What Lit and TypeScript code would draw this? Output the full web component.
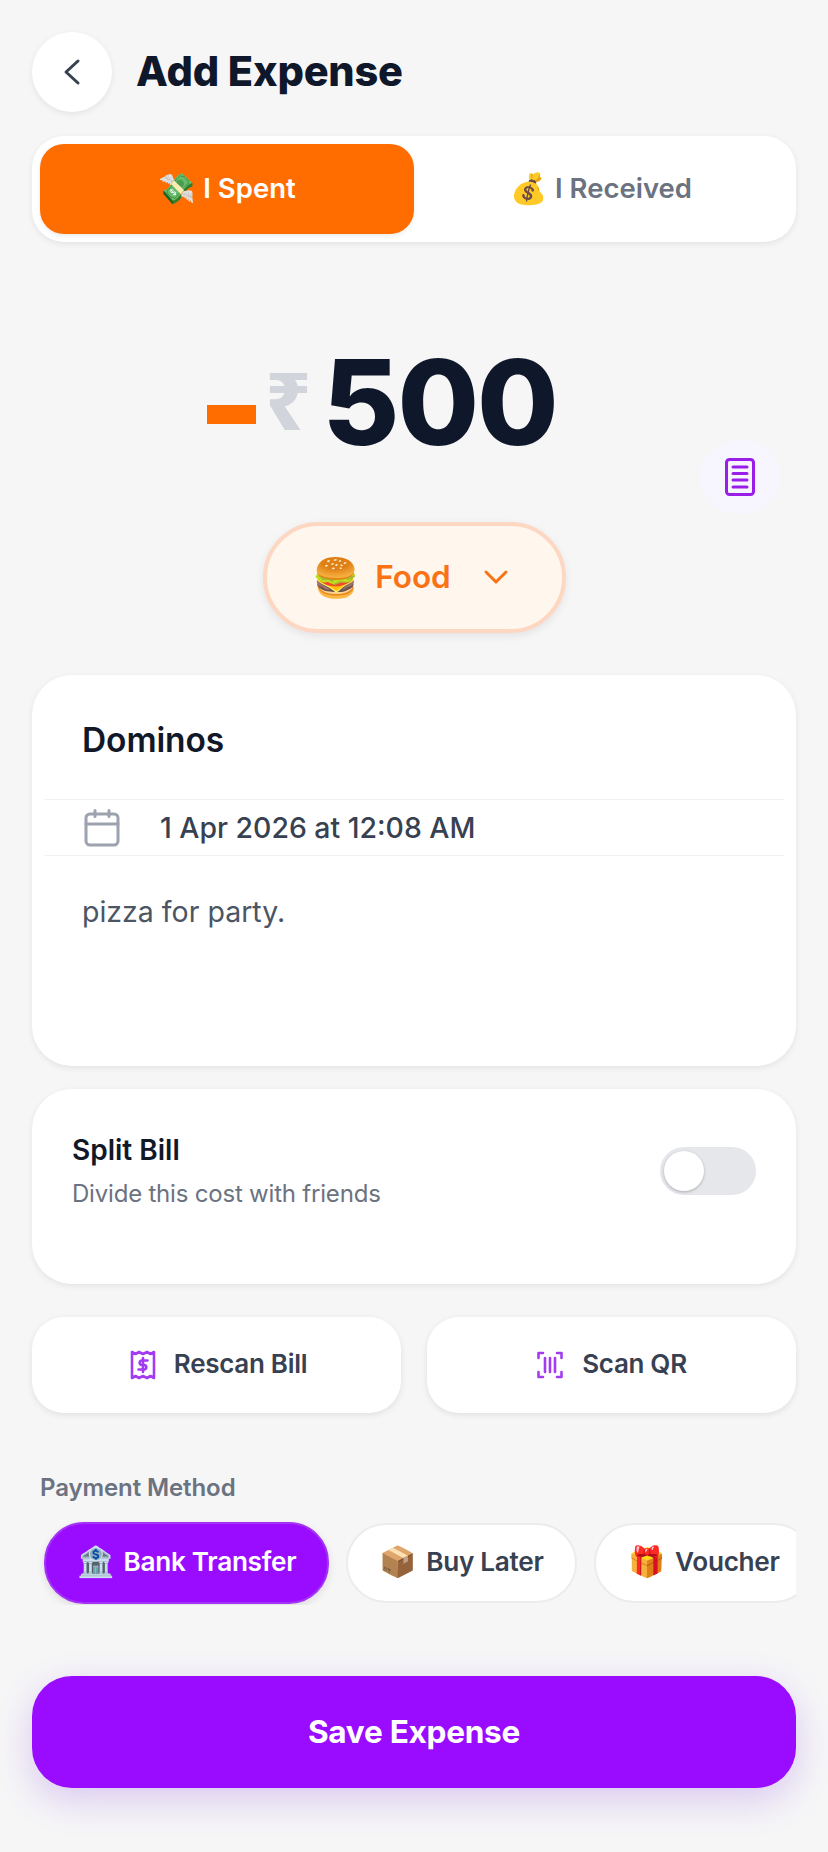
import { LitElement, html, css } from "lit";
import { customElement } from "lit/decorators.js";

@customElement("app-root")
export class AppRoot extends LitElement {
  static styles = css`
    :host { display: block; width: 828px; height: 1852px; background: #f6f6f7; font-family: "Inter", "Noto Sans", sans-serif; color: #111827; overflow: hidden; }
    .page { padding: 32px 32px 0; display: flex; flex-direction: column; }
    .header { display: flex; align-items: center; gap: 24px; height: 80px; }
    .back { width: 80px; height: 80px; border-radius: 50%; background: #fff; box-shadow: 0 2px 6px rgba(0,0,0,.08); display: flex; align-items: center; justify-content: center; }
    .back svg { width: 32px; height: 32px; }
    h1 { margin: 0 0 2px; font-size: 41.500px; font-weight: 800; color: #0f172a; letter-spacing: -.2px; }
    .seg { margin-top: 24px; height: 106px; box-sizing: border-box; padding: 8px; background: #fff; border-radius: 32px; box-shadow: 0 2px 6px rgba(0,0,0,.08); display: grid; grid-template-columns: 374px 1fr; }
    .seg div { display: flex; align-items: center; justify-content: center; gap: 8px; font-size: 27.500px; font-weight: 600; color: #6b7280; border-radius: 24px; padding-bottom: 2px; box-sizing: border-box; }
    .seg .on { background: #ff6d00; color: #fff; box-shadow: 0 2px 4px rgba(0,0,0,.08); }
    .seg .emoji { font-size: 30px; }
    .amount { margin-top: 117px; height: 87px; padding-right: 64px; display: flex; align-items: center; justify-content: center; position: relative; }
    .minus { width: 49px; height: 19px; background: #ff6d00; margin-top: 24px; }
    .rupee { margin-left: 9px; font-size: 80px; font-weight: 800; color: #d1d5db; line-height: 1; font-family: "Noto Sans", sans-serif; margin-top: -8px; }
    .num { margin-left: 11px; font-size: 118px; font-weight: 800; color: #0f172a; line-height: 87px; letter-spacing: -2px; }
    .note { position: absolute; right: 16px; top: 81px; width: 80px; height: 74px; border-radius: 50%; background: #f7f5fd; display: flex; align-items: center; justify-content: center; }
    .pill-wrap { margin-top: 76px; display: flex; justify-content: center; }
    .pill { width: 303px; height: 111px; box-sizing: border-box; border: 4px solid #fed7c2; border-radius: 56px; background: #fff7ed; box-shadow: 0 3px 8px rgba(0,0,0,.08); display: flex; align-items: center; justify-content: center; gap: 16px; color: #f97316; font-size: 31.500px; font-weight: 600; padding: 0 7px 2px 0; }
    .pill .emoji { font-size: 38px; }
    .pill svg { margin-left: 16px; }
    .card { background: #fff; border-radius: 40px; box-shadow: 0 2px 6px rgba(0,0,0,.08); }
    .details { margin-top: 42px; height: 391px; padding: 0 12px; box-sizing: border-box; }
    .name { height: 125px; display: flex; align-items: center; padding: 5px 0 0 38px; font-size: 33.500px; font-weight: 600; color: #111827; border-bottom: 1px solid #f1f2f4; box-sizing: border-box; letter-spacing: -.1px; }
    .date { height: 56px; display: flex; align-items: center; gap: 40px; padding-left: 40px; font-size: 28.400px; font-weight: 500; color: #374151; border-bottom: 1px solid #f1f2f4; box-sizing: border-box; }
    .memo { padding: 40px 0 0 38px; font-size: 28.500px; color: #4b5563; line-height: 32px; }
    .split { margin-top: 23px; height: 195px; box-sizing: border-box; padding: 43px 40px 0; display: flex; justify-content: space-between; }
    .split b { display: block; font-size: 28px; font-weight: 600; color: #111827; line-height: 36px; }
    .split span { display: block; margin-top: 10px; font-size: 24px; color: #6b7280; line-height: 32px; letter-spacing: -.2px; }
    .toggle { margin-top: 15px; width: 96px; height: 48px; border-radius: 24px; background: #e5e7eb; padding: 4px; box-sizing: border-box; }
    .toggle i { display: block; width: 40px; height: 40px; border-radius: 50%; background: #fff; box-shadow: 0 1px 3px rgba(0,0,0,.25); }
    .actions { margin-top: 33px; display: grid; grid-template-columns: 369px 369px; gap: 26px; }
    .action { height: 96px; box-sizing: border-box; padding-bottom: 4px; border-radius: 32px; background: #fff; box-shadow: 0 2px 6px rgba(0,0,0,.09); display: flex; align-items: center; justify-content: center; gap: 18px; font-size: 26px; font-weight: 600; color: #374151; letter-spacing: -.3px; }
    .action svg { margin-top: 4px; }
    .action.rescan { padding-left: 4px; }
    .label { margin: 59px 0 0 8px; font-size: 24px; font-weight: 600; color: #6b7280; line-height: 32px; letter-spacing: -.1px; }
    .methods { margin-top: 17px; display: flex; align-items: center; gap: 17px; padding-left: 12px; height: 84px; overflow: hidden; }
    .method { flex: none; height: 80px; box-sizing: border-box; padding-bottom: 4px; border: 2px solid #ececee; border-radius: 40px; background: #fff; display: flex; align-items: center; justify-content: center; gap: 10px; font-size: 26.200px; font-weight: 600; color: #374151; letter-spacing: -.3px; }
    .method .emoji { font-size: 30px; }
    .method.on { width: 285px; height: 82px; background: #9a0cff; border-color: #a433f5; color: #fff; box-shadow: 0 3px 8px rgba(0,0,0,.1); }
    .m-later { width: 231px; }
    .m-voucher { width: 220px; }
    .save { margin-top: 71px; height: 112px; box-sizing: border-box; padding-bottom: 2px; border-radius: 40px; background: #9a0cff; color: #fff; font-size: 31.600px; font-weight: 700; display: flex; align-items: center; justify-content: center; box-shadow: 0 12px 36px rgba(120,40,220,.22); letter-spacing: -.3px; }
  `;

  render() {
    return html`<div class="page">
      <div class="header">
        <div class="back"><svg viewBox="0 0 32 32" fill="none" stroke="#374151" stroke-width="3" stroke-linecap="round" stroke-linejoin="round"><path d="M22 5 L10 16 L22 27"/></svg></div>
        <h1>Add Expense</h1>
      </div>
      <div class="seg"><div class="on"><span class="emoji">💸</span><span>I Spent</span></div><div><span class="emoji">💰</span><span>I Received</span></div></div>
      <div class="amount">
        <div class="minus"></div><div class="rupee">₹</div><div class="num">500</div>
        <div class="note"><svg width="30" height="38" viewBox="0 0 30 38" fill="none" stroke="#9a1ee8" stroke-width="3" stroke-linecap="round"><rect x="1.500" y="1.500" width="27" height="35" rx="3"/><path d="M8 9h14M8 15.500h14M8 22h14M8 29h14"/></svg></div>
      </div>
      <div class="pill-wrap"><div class="pill"><span class="emoji">🍔</span><span>Food</span><svg width="26" height="16" viewBox="0 0 26 16" fill="none" stroke="#f97316" stroke-width="3" stroke-linecap="round" stroke-linejoin="round"><path d="M3 3 L13 13 L23 3"/></svg></div></div>
      <div class="card details">
        <div class="name">Dominos</div>
        <div class="date"><svg width="36" height="38" viewBox="0 0 36 38" fill="none" stroke="#9ca3af" stroke-width="3" stroke-linecap="round"><rect x="2" y="5" width="32" height="31" rx="4"/><path d="M2 15h32M11 1.500v6M25 1.500v6"/></svg><span>1 Apr 2026 at 12:08 AM</span></div>
        <div class="memo">pizza for party.</div>
      </div>
      <div class="card split">
        <div><b>Split Bill</b><span>Divide this cost with friends</span></div>
        <div class="toggle"><i></i></div>
      </div>
      <div class="actions">
        <div class="action rescan"><svg width="26" height="30" viewBox="0 0 26 30" fill="none" stroke="#a33cf0" stroke-width="2.600" stroke-linecap="round" stroke-linejoin="round"><path d="M2 2 l3.500 2 3.500-2 4 2 4-2 3.500 2 3.500-2 v26 l-3.500-2 -3.500 2 -4-2 -4 2 -3.500-2 -3.500 2z"/><path d="M17.500 10.500h-6a2.300 2.300 0 0 0 0 4.500h3a2.300 2.300 0 0 1 0 4.500h-6M13 8v14"/></svg><span>Rescan Bill</span></div>
        <div class="action"><svg width="28" height="28" viewBox="0 0 28 28" fill="none" stroke="#a33cf0" stroke-width="2.600" stroke-linecap="round" stroke-linejoin="round"><path d="M7 2H2.500V7M21 2h4.500V7M7 26H2.500V21M21 26h4.500V21M9 7v14M14 7v14M19 7v14"/></svg><span>Scan QR</span></div>
      </div>
      <div class="label">Payment Method</div>
      <div class="methods">
        <div class="method on"><span class="emoji">🏦</span><span>Bank Transfer</span></div>
        <div class="method m-later"><span class="emoji">📦</span><span>Buy Later</span></div>
        <div class="method m-voucher"><span class="emoji">🎁</span><span>Voucher</span></div>
      </div>
      <div class="save">Save Expense</div>
    </div>`;
  }
}
